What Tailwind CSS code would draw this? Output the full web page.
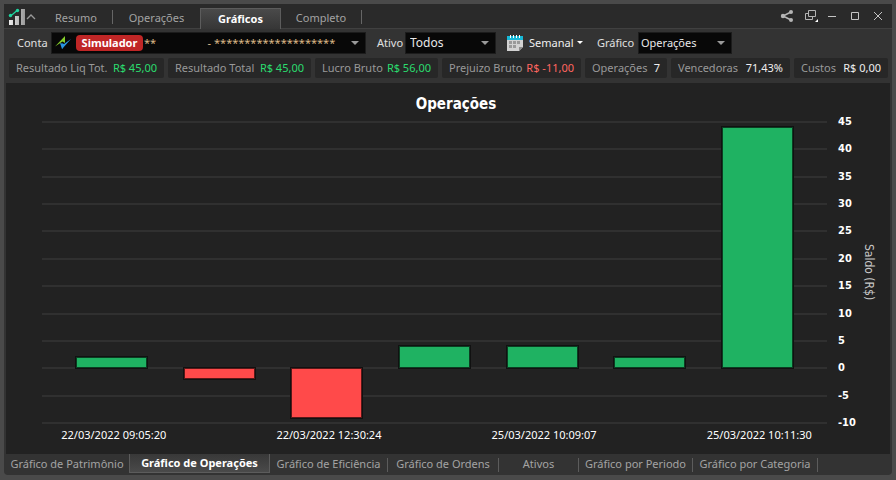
<!doctype html>
<html lang="pt-BR">
<head>
  <meta charset="UTF-8">
  <meta name="viewport" content="width=device-width, initial-scale=1.0">
  <title>Gráfico de Operações</title>
  <script src="https://cdn.jsdelivr.net/npm/@tailwindcss/browser@4"></script>
</head>
<body class="h-screen flex flex-col bg-[#4a4a4a] p-1 pb-[5px] font-['Noto_Sans',sans-serif] text-[11px] leading-4 text-white">
  <div class="flex flex-col flex-grow min-h-0 bg-[#333333] rounded-sm">
    <!-- title bar -->
    <header class="flex items-end justify-between h-[25px] shrink-0 bg-[#2a2a2a] border-b border-[#404040] pl-1 pr-2">
      <div class="flex items-end h-full">
        <svg class="w-[18px] h-[18px] mb-0.5" viewBox="0 0 18 18">
          <defs><linearGradient id="metal" x2="1"><stop offset="0" stop-color="#eee"/><stop offset="1" stop-color="#999"/></linearGradient></defs>
          <path d="M1 12h4v5H1zM7 8h4v9H7zM13 1h4v16h-4z" fill="url(#metal)"/>
          <path d="M2 8l3-2 4-3.500" stroke="#1fd6a0" stroke-width="1.3" fill="none"/>
          <circle cx="2.500" cy="7.500" r="1.700" fill="#1fd6a0"/><circle cx="9.500" cy="2.500" r="1.700" fill="#1fd6a0"/>
        </svg>
        <svg class="w-[10px] h-[10px] mb-1.5" viewBox="0 0 10 10"><path d="M1 7l4-4 4 4" stroke="#999" fill="none" stroke-width="1.3"/></svg>
        <nav class="flex items-end h-full text-[#a3a3a3]">
          <button class="w-[76px] h-5 pl-1">Resumo</button>
          <span class="w-px h-3.5 mb-1 bg-[#666]"></span>
          <button class="w-[87px] h-5">Operações</button>
          <button class="w-[81px] h-[21px] -mb-px border border-b-0 border-[#5c5c5c] bg-linear-to-b from-[#4a4a4a] to-[#363636] font-bold text-white">Gráficos</button>
          <button class="w-20 h-5">Completo</button>
          <span class="w-px h-3.5 mb-1 bg-[#666]"></span>
        </nav>
      </div>
      <div class="flex items-center gap-2.5 h-6">
        <button aria-label="Compartilhar"><svg class="w-3.5 h-3.5" viewBox="0 0 14 14"><path d="M11 3L3 7l8 4" stroke="#b5b5b5" fill="none" stroke-width="1.5"/><circle cx="11" cy="3" r="2" fill="#b5b5b5"/><circle cx="3" cy="7" r="2.2" fill="#b5b5b5"/><circle cx="11" cy="11" r="2" fill="#b5b5b5"/></svg></button>
        <button aria-label="Janelas"><svg class="w-3.5 h-3.5" viewBox="0 0 14 14"><path d="M4.500 1.500h7v6h-7zM4.500 4.500h-3v6h7v-3" stroke="#b5b5b5" fill="none"/><path d="M14 10v3h-3z" fill="#fff"/></svg></button>
        <button aria-label="Minimizar"><svg class="w-3 h-3" viewBox="0 0 12 12"><path d="M0 6.500h8" stroke="#c4c4c4"/></svg></button>
        <button aria-label="Maximizar"><svg class="w-3 h-3" viewBox="0 0 12 12"><path d="M1.500 2.500h7v7h-7z" stroke="#c4c4c4" fill="none"/></svg></button>
        <button aria-label="Fechar"><svg class="w-3 h-3" viewBox="0 0 12 12"><path d="M2 2l8 8M10 2l-8 8" stroke="#c4c4c4" fill="none"/></svg></button>
      </div>
    </header>

    <!-- filters -->
    <div class="flex items-center h-[27px] shrink-0 pl-[13px]">
      <label for="conta" class="w-[34px] text-[#e0e0e0]">Conta</label>
      <div class="relative flex items-center w-[315px] h-[22px] bg-[#080808] border border-[#1c1c1c] pl-[3px]">
        <svg class="w-4 h-3.5 shrink-0" viewBox="0 0 16 14"><path d="M5 7l4 1 7-5-9 10z" fill="#2a95e0"/><path d="M0 10.500L10 0v7L7.500 5.500z" fill="#86cf2a"/><path d="M7 13V7.500L10 8.500z" fill="#2a95e0"/></svg>
        <span class="w-[67px] ml-[5px] rounded-sm bg-[#c02626] font-bold text-center">Simulador</span>
        <select id="conta" class="appearance-none flex-grow h-full pl-px text-[#dcb887]"><option>**&nbsp;&nbsp;&nbsp;&nbsp;&nbsp;&nbsp;&nbsp;&nbsp;&nbsp;&nbsp;&nbsp;&nbsp;&nbsp;&nbsp;&nbsp;&nbsp;&nbsp;&nbsp;-&nbsp;********************</option></select>
        <svg class="absolute right-1.5 w-2 h-1 pointer-events-none" viewBox="0 0 8 4"><path d="M0 0h8L4 4z" fill="#999"/></svg>
      </div>
      <label for="ativo" class="ml-[11px] w-7 text-[#e0e0e0]">Ativo</label>
      <div class="relative flex items-center w-[91px] h-[22px] bg-[#080808] border border-[#1c1c1c]">
        <select id="ativo" class="appearance-none w-full h-full pl-1 text-xs text-[#e8e8e8]"><option>Todos</option></select>
        <svg class="absolute right-1.5 w-2 h-1 pointer-events-none" viewBox="0 0 8 4"><path d="M0 0h8L4 4z" fill="#999"/></svg>
      </div>
      <button class="flex items-center ml-[11px] text-[#f0f0f0]">
        <svg class="w-4 h-4" viewBox="0 0 16 16"><path d="M0 1h16v11l-4 4H0z" fill="#d2d2d2"/><path d="M12 16v-4h4z" fill="#8c8c8c"/><path d="M0 1h16v4H0z" fill="#18b9d8"/><path d="M3 0h1v3H3zM6 0h1v3H6zM9 0h1v3H9zM12 0h1v3h-1z" fill="#fff"/><path d="M2 6h3v3H2zM6 6h3v3H6zM10 6h3v3h-3zM2 10h3v3H2zM6 10h3v3H6z" fill="#999"/></svg>
        <span class="ml-1.5 w-12 text-left">Semanal</span>
        <svg class="w-1.5 h-[3px]" viewBox="0 0 6 3"><path d="M0 0h6L3 3z" fill="#fff"/></svg>
      </button>
      <label for="grafico" class="ml-3.5 w-[41px] text-[#e0e0e0]">Gráfico</label>
      <div class="relative flex items-center w-[94px] h-[22px] bg-[#080808] border border-[#1c1c1c]">
        <select id="grafico" class="appearance-none w-full h-full pl-0.5 text-[#e8e8e8]"><option>Operações</option></select>
        <svg class="absolute right-1.5 w-2 h-1 pointer-events-none" viewBox="0 0 8 4"><path d="M0 0h8L4 4z" fill="#999"/></svg>
      </div>
    </div>

    <!-- totals -->
    <div id="totals" class="flex items-center gap-1 h-[27px] shrink-0 pb-1 pl-[5px] pr-1"></div>

    <!-- chart -->
    <main class="flex flex-col flex-grow min-h-0 mx-0.5 pt-[13px] bg-[#222222]">
      <h1 class="text-[15px] leading-4 font-bold text-center ml-4 font-['DejaVu_Sans_Condensed','DejaVu_Sans',sans-serif]">Operações</h1>
      <div class="flex flex-grow min-h-0 mt-2.5 pl-9">
        <div class="relative flex-grow">
          <div id="grid" class="absolute inset-0 -my-px flex flex-col justify-between"></div>
          <div id="bars" class="relative flex h-full px-4"></div>
        </div>
        <div id="axis" class="w-9 pl-[11px] flex flex-col justify-between font-bold font-['DejaVu_Sans_Condensed','DejaVu_Sans',sans-serif]"></div>
        <div class="w-[27px] flex items-center text-xs leading-3 text-[#c8c8c8] font-['DejaVu_Sans_Condensed','DejaVu_Sans',sans-serif]"><span class="[writing-mode:vertical-rl]">Saldo (R$)</span></div>
      </div>
      <div id="dates" class="flex mt-1 mb-[11px] pl-[54px] pr-[77px] h-4"></div>
    </main>

    <!-- bottom tabs -->
    <nav class="flex items-start h-[21px] shrink-0 mx-0.5 text-[#a3a3a3]">
      <button class="w-[122px] h-[19px]">Gráfico de Patrimônio</button>
      <button class="w-[141px] ml-px h-[19px] border border-t-0 border-[#5c5c5c] bg-linear-to-b from-[#383838] to-[#4a4a4a] font-bold text-white">Gráfico de Operações</button>
      <button class="w-[117px] h-[19px]">Gráfico de Eficiência</button>
      <span class="w-px h-3.5 mt-1 bg-[#5c5c5c]"></span>
      <button class="w-[110px] h-[19px]">Gráfico de Ordens</button>
      <span class="w-px h-3.5 mt-1 bg-[#5c5c5c]"></span>
      <button class="w-[79px] h-[19px]">Ativos</button>
      <span class="w-px h-3.5 mt-1 bg-[#5c5c5c]"></span>
      <button class="w-[113px] h-[19px]">Gráfico por Periodo</button>
      <span class="w-px h-3.5 mt-1 bg-[#5c5c5c]"></span>
      <button class="w-[124px] h-[19px]">Gráfico por Categoria</button>
      <span class="w-px h-3.5 mt-1 bg-[#5c5c5c]"></span>
    </nav>
  </div>

  <script>
    const MAX = 45, MIN = -10;
    const trades = [
      [2, '22/03/2022 09:05:20'], [-2, ''], [-9, '22/03/2022 12:30:24'], [4, ''],
      [4, '25/03/2022 10:09:07'], [2, ''], [44, '25/03/2022 10:11:30'],
    ];
    const totals = [
      ['Resultado Liq Tot.', 'R$ 45,00', 'text-[#2bdc6e]', 'w-[155px]'],
      ['Resultado Total', 'R$ 45,00', 'text-[#2bdc6e]', 'w-[143px]'],
      ['Lucro Bruto', 'R$ 56,00', 'text-[#2bdc6e]', 'w-[123px]'],
      ['Prejuizo Bruto', 'R$ -11,00', 'text-[#ff6660]', 'w-[139px]'],
      ['Operações', '7', 'text-[#eeeeee]', 'w-[82px]'],
      ['Vencedoras', '71,43%', 'text-[#eeeeee]', 'w-[119px]'],
      ['Custos', 'R$ 0,00', 'text-[#eeeeee]', 'w-[94px]'],
    ];

    document.getElementById('totals').innerHTML = totals.map(([name, value, color, width]) =>
      `<div class="${width} h-5 px-[7px] flex justify-between items-center rounded-xs bg-[#272727] whitespace-nowrap"><span class="text-[#999999]">${name}</span><span class="${color}">${value}</span></div>`).join('');

    for (let v = MAX; v >= MIN; v -= 5) {
      document.getElementById('grid').innerHTML += '<div class="h-0.5 bg-[#303030]"></div>';
      document.getElementById('axis').innerHTML += `<div class="h-0 flex items-center">${v}</div>`;
    }

    trades.forEach(([value, date]) => {
      const top = (MAX - Math.max(value, 0)) / (MAX - MIN) * 100;
      const height = Math.abs(value) / (MAX - MIN) * 100;
      const color = value > 0 ? 'bg-[#1fb262] border-[#0b3d22]' : 'bg-[#ff4a4a] border-[#571818]';
      document.getElementById('bars').innerHTML +=
        `<div class="relative flex-1"><div class="absolute inset-x-[17%] border outline outline-[#111111] ${color}" style="top:${top}%;height:${height}%"></div></div>`;
      document.getElementById('dates').innerHTML += `<div class="flex-1 text-center whitespace-nowrap">${date}</div>`;
    });
  </script>
</body>
</html>
